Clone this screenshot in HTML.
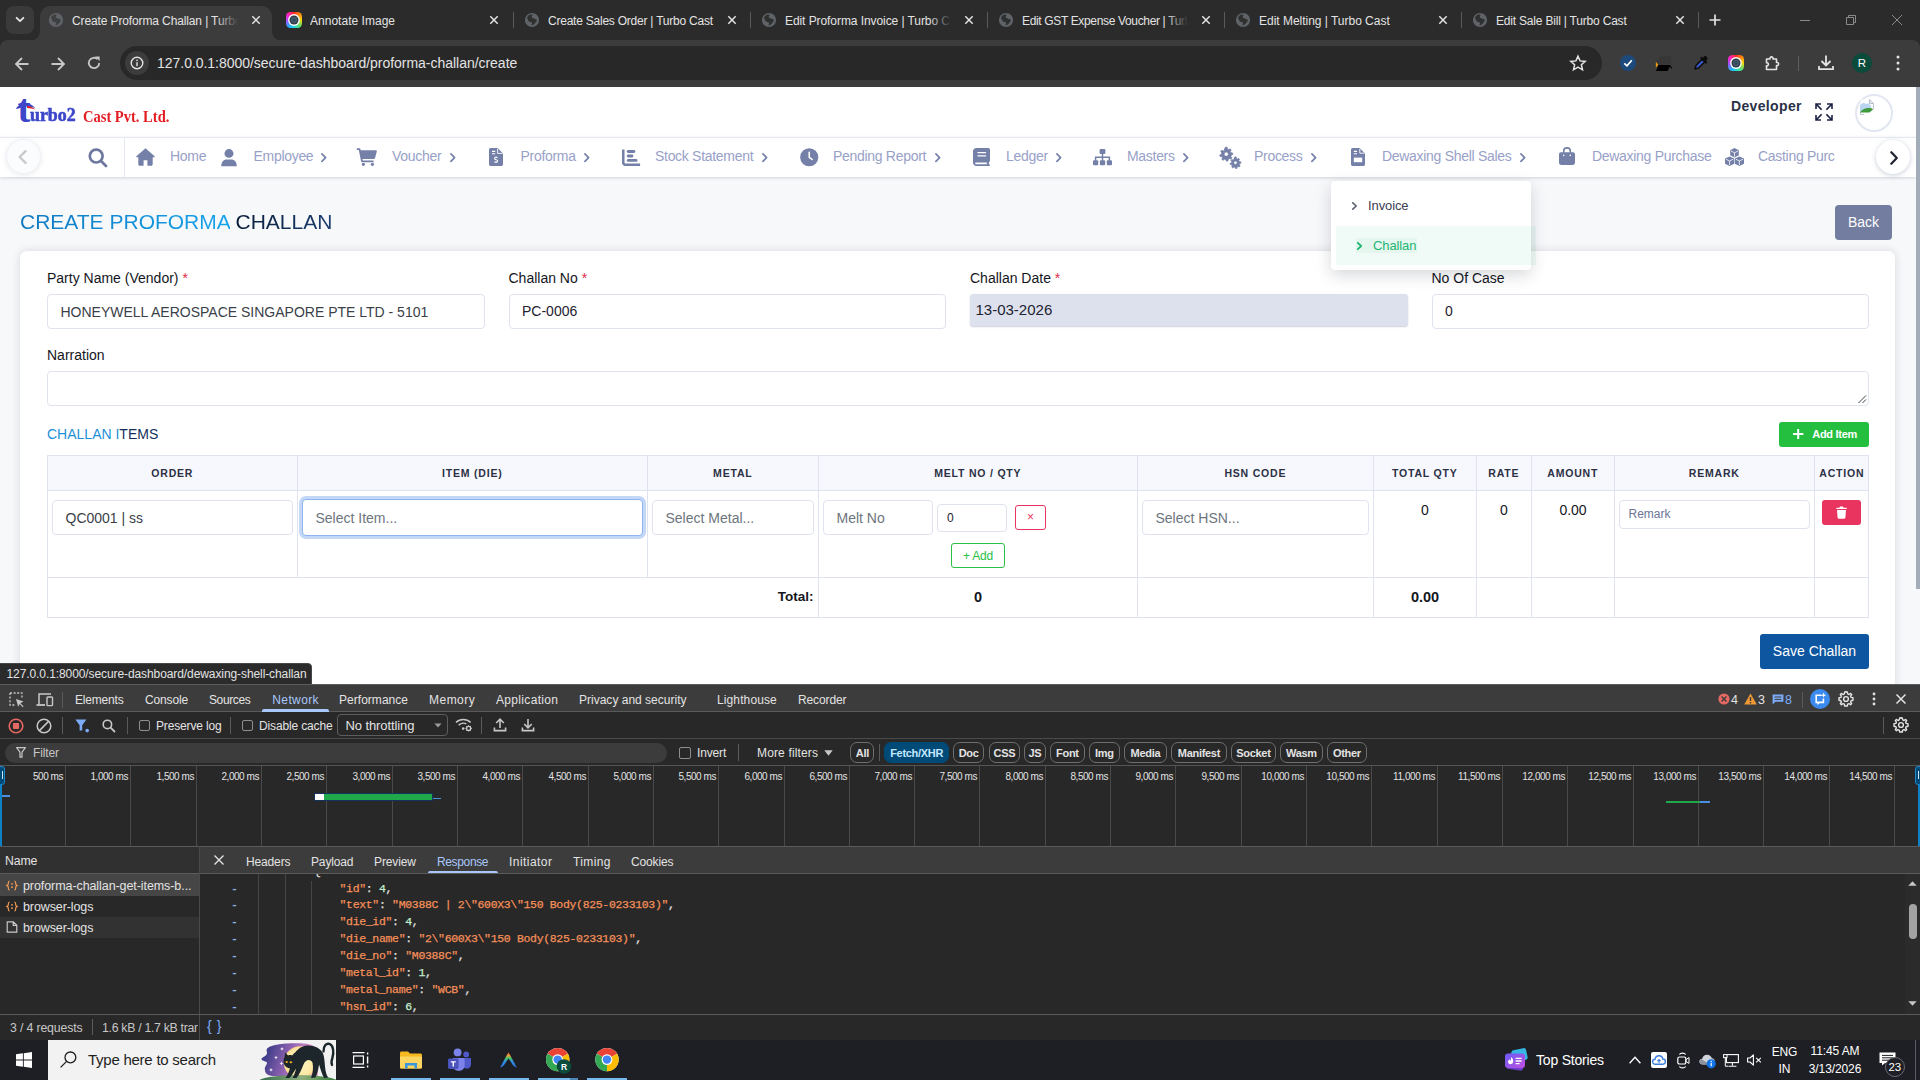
<!DOCTYPE html>
<html lang="en">
<head>
<meta charset="utf-8">
<title>Create Proforma Challan | Turbo Cast</title>
<style>
*{box-sizing:border-box;margin:0;padding:0}
html,body{width:1920px;height:1080px;overflow:hidden;background:#fff;font-family:"Liberation Sans",sans-serif}
.abs{position:absolute}
#root{position:relative;width:1920px;height:1080px;overflow:hidden}
svg{display:block;position:absolute;overflow:visible}

#tabstrip{position:absolute;left:0;top:0;width:1920px;height:52px;background:#2b2b2b}
#toolbar{position:absolute;left:0;top:40px;width:1920px;height:47px;background:#3c3c3c;border-radius:8px 8px 0 0}
.tt{position:absolute;top:7px;height:28px;line-height:28px;font-size:12px;letter-spacing:-0.2px;color:#e3e3e3;white-space:nowrap;overflow:hidden}
.tsep{position:absolute;top:12px;width:1px;height:16px;background:#5a5a5a}
#omni{position:absolute;left:120px;top:46px;width:1482px;height:34px;border-radius:17px;background:#282828}
#url{position:absolute;left:157px;top:47px;height:34px;line-height:33px;font-size:14px;color:#e3e3e3;white-space:nowrap;letter-spacing:-0.03px}

#app{position:absolute;left:0;top:87px;width:1916px;height:598px;background:#f7f8fa;overflow:hidden}
#app .abs{position:absolute}
#hdr{position:absolute;left:0;top:0;width:1916px;height:50px;background:#fff}
#nav{position:absolute;left:0;top:50px;width:1916px;height:40px;background:#fff;border-top:1px solid #e4e8f1;box-shadow:0 1px 3px rgba(60,65,90,.2)}
.ni{position:absolute;top:57px;height:24px;line-height:24px;font-size:14px;color:#98a1c8;white-space:nowrap;letter-spacing:-0.3px}
.nic{fill:#7480a8}
.lbl{position:absolute;font-size:14px;line-height:18px;color:#14161d;white-space:nowrap}
.lbl b{color:#e0294a;font-weight:400}
.inp{position:absolute;background:#fff;border:1px solid #dfe3ef;border-radius:4px;font-size:14px;color:#3a3f48;white-space:nowrap;overflow:hidden}
.ph{color:#6c757d}
#tbl{position:absolute;left:47px;top:368px;width:1822px;height:163px;border:1px solid #dfe3ef;background:#fff}
.th{position:absolute;top:369px;height:34px;line-height:34px;font-size:10.5px;font-weight:700;letter-spacing:0.8px;color:#2b3044;text-align:center;white-space:nowrap}
.vl{position:absolute;width:1px;background:#dfe3ef}
.hl{position:absolute;height:1px;background:#dfe3ef;left:47px;width:1822px}
.cv{position:absolute;font-size:14px;line-height:18px;color:#14161d;text-align:center;white-space:nowrap}

#dt{position:absolute;left:0;top:684px;width:1920px;height:356px;background:#282828;overflow:hidden;font-family:"Liberation Sans",sans-serif;color:#e3e3e3}
#dt .abs{position:absolute}
.dtt{position:absolute;top:6px;height:20px;line-height:20px;font-size:12px;letter-spacing:-0.1px;color:#e3e3e3;white-space:nowrap}
.dt2{position:absolute;height:18px;line-height:18px;font-size:12px;letter-spacing:-0.15px;color:#e3e3e3;white-space:nowrap}
.chip{position:absolute;top:58px;height:21px;border:1px solid #6e6e6e;border-radius:7px;font-size:11px;line-height:20px;text-align:center;color:#e3e3e3;white-space:nowrap;letter-spacing:-0.3px;font-weight:700}
.tl{position:absolute;top:85.5px;width:60px;text-align:right;font-size:10px;line-height:14px;color:#e3e3e3;white-space:nowrap;letter-spacing:-0.45px}
.gl{position:absolute;top:82px;width:1px;height:80px;background:#4a4a4a}
.code{position:absolute;left:339.5px;height:17px;line-height:17px;font-family:"Liberation Mono",monospace;font-size:11.5px;white-space:pre;color:#e3e3e3;letter-spacing:-0.33px;-webkit-text-stroke:0.25px currentColor}
.code i{font-style:normal;color:#f5905a}
.code u{text-decoration:none;color:#c4eed0}
.dash{position:absolute;left:231px;height:17px;line-height:17px;font-family:"Liberation Mono",monospace;font-size:11.5px;color:#8fb0e8;font-weight:700}

#tb{position:absolute;left:0;top:1040px;width:1920px;height:40px;background:#1e1f25;overflow:hidden;color:#fff}
#tb .abs{position:absolute}
.tbt{position:absolute;font-size:12px;line-height:14px;color:#fff;white-space:nowrap;text-align:center;letter-spacing:-0.1px}

</style>
</head>
<body>
<div id="root">
<!-- p10_chrome -->
<div id="tabstrip"></div><div id="toolbar"></div>
<div class="abs" style="left:6px;top:6px;width:28px;height:28px;border-radius:8px;background:#3a3a3a"></div>
<svg style="left:15px;top:16px" width="10" height="8" viewBox="0 0 10 8" ><path d="M1.6 1.8 L5 5.2 L8.4 1.8" fill="none" stroke="#e3e3e3" stroke-width="1.8" stroke-linecap="round" stroke-linejoin="round"/></svg>
<div class="abs" style="left:40px;top:6px;width:232px;height:35px;background:#3c3c3c;border-radius:10px 10px 0 0"></div>
<svg style="left:30px;top:31px" width="10" height="10" viewBox="0 0 10 10" ><path d="M10 0 V10 H0 A10 10 0 0 0 10 0Z" fill="#3c3c3c"/></svg>
<svg style="left:272px;top:31px" width="10" height="10" viewBox="0 0 10 10" ><path d="M0 0 V10 H10 A10 10 0 0 1 0 0Z" fill="#3c3c3c"/></svg>
<svg style="left:48px;top:12px" width="16" height="16" viewBox="0 0 16 16" ><circle cx="8" cy="8" r="7.1" fill="#5f6368"/><path d="M4.4 3.6 C5.8 2.4 7.8 2 8.8 2.8 C7.8 3.8 7.4 4.8 8.2 5.8 C9.4 7 11.2 6.4 12.6 7.6 C13 8.8 12.4 10 11.4 10.6 C11 12 9.6 13.2 7.4 13.4 C7.6 12.4 8.4 11.6 8 10.8 C7.2 9.6 5.6 10.2 4.6 9.2 C3.8 8.2 4.4 7.2 3.2 6.8 C3 5.6 3.6 4.4 4.4 3.6Z" fill="#3c3c3c" opacity=".92"/></svg>
<div class="tt" style="left:72px;width:170px;letter-spacing:-0.122px">Create Proforma Challan | Turbo Cast</div>
<div class="abs" style="left:216px;top:8px;width:26px;height:26px;background:linear-gradient(90deg,rgba(0,0,0,0),#3c3c3c 85%)"></div>
<svg style="left:250px;top:14px" width="12" height="12" viewBox="0 0 12 12" ><path d="M2.3 2.3 L9.7 9.7 M9.7 2.3 L2.3 9.7" stroke="#e3e3e3" stroke-width="1.5" stroke-linecap="butt" fill="none"/></svg>
<div class="abs" style="left:286px;top:12px;width:16px;height:16px;border-radius:4.5px;background:conic-gradient(from 0deg,#ff2a1f,#ff8a10 45deg,#f4d80c 90deg,#7ddc55 125deg,#25e0c8 170deg,#20b4ff 215deg,#9a55ff 260deg,#ff22c8 310deg,#ff2a1f)"></div><svg style="left:286px;top:12px" width="16" height="16" viewBox="0 0 16 16" ><circle cx="8" cy="8" r="5.9" fill="#fff"/><circle cx="8" cy="8" r="4.5" fill="#2f3b47"/><circle cx="8" cy="8" r="3" fill="#4a5b6b"/><circle cx="8" cy="8" r="1.7" fill="#2c4a5e"/></svg>
<div class="tt" style="left:310px;width:170px;letter-spacing:0.021px">Annotate Image</div>
<svg style="left:488px;top:14px" width="12" height="12" viewBox="0 0 12 12" ><path d="M2.3 2.3 L9.7 9.7 M9.7 2.3 L2.3 9.7" stroke="#e3e3e3" stroke-width="1.5" stroke-linecap="butt" fill="none"/></svg>
<svg style="left:524px;top:12px" width="16" height="16" viewBox="0 0 16 16" ><circle cx="8" cy="8" r="7.1" fill="#5f6368"/><path d="M4.4 3.6 C5.8 2.4 7.8 2 8.8 2.8 C7.8 3.8 7.4 4.8 8.2 5.8 C9.4 7 11.2 6.4 12.6 7.6 C13 8.8 12.4 10 11.4 10.6 C11 12 9.6 13.2 7.4 13.4 C7.6 12.4 8.4 11.6 8 10.8 C7.2 9.6 5.6 10.2 4.6 9.2 C3.8 8.2 4.4 7.2 3.2 6.8 C3 5.6 3.6 4.4 4.4 3.6Z" fill="#2b2b2b" opacity=".92"/></svg>
<div class="tt" style="left:548px;width:170px;letter-spacing:-0.229px">Create Sales Order | Turbo Cast</div>
<svg style="left:726px;top:14px" width="12" height="12" viewBox="0 0 12 12" ><path d="M2.3 2.3 L9.7 9.7 M9.7 2.3 L2.3 9.7" stroke="#e3e3e3" stroke-width="1.5" stroke-linecap="butt" fill="none"/></svg>
<svg style="left:761px;top:12px" width="16" height="16" viewBox="0 0 16 16" ><circle cx="8" cy="8" r="7.1" fill="#5f6368"/><path d="M4.4 3.6 C5.8 2.4 7.8 2 8.8 2.8 C7.8 3.8 7.4 4.8 8.2 5.8 C9.4 7 11.2 6.4 12.6 7.6 C13 8.8 12.4 10 11.4 10.6 C11 12 9.6 13.2 7.4 13.4 C7.6 12.4 8.4 11.6 8 10.8 C7.2 9.6 5.6 10.2 4.6 9.2 C3.8 8.2 4.4 7.2 3.2 6.8 C3 5.6 3.6 4.4 4.4 3.6Z" fill="#2b2b2b" opacity=".92"/></svg>
<div class="tt" style="left:785px;width:170px;letter-spacing:-0.073px">Edit Proforma Invoice | Turbo Cast</div>
<div class="abs" style="left:929px;top:8px;width:26px;height:26px;background:linear-gradient(90deg,rgba(0,0,0,0),#2b2b2b 85%)"></div>
<svg style="left:963px;top:14px" width="12" height="12" viewBox="0 0 12 12" ><path d="M2.3 2.3 L9.7 9.7 M9.7 2.3 L2.3 9.7" stroke="#e3e3e3" stroke-width="1.5" stroke-linecap="butt" fill="none"/></svg>
<svg style="left:998px;top:12px" width="16" height="16" viewBox="0 0 16 16" ><circle cx="8" cy="8" r="7.1" fill="#5f6368"/><path d="M4.4 3.6 C5.8 2.4 7.8 2 8.8 2.8 C7.8 3.8 7.4 4.8 8.2 5.8 C9.4 7 11.2 6.4 12.6 7.6 C13 8.8 12.4 10 11.4 10.6 C11 12 9.6 13.2 7.4 13.4 C7.6 12.4 8.4 11.6 8 10.8 C7.2 9.6 5.6 10.2 4.6 9.2 C3.8 8.2 4.4 7.2 3.2 6.8 C3 5.6 3.6 4.4 4.4 3.6Z" fill="#2b2b2b" opacity=".92"/></svg>
<div class="tt" style="left:1022px;width:170px;letter-spacing:-0.344px">Edit GST Expense Voucher | Turbo Cast</div>
<div class="abs" style="left:1166px;top:8px;width:26px;height:26px;background:linear-gradient(90deg,rgba(0,0,0,0),#2b2b2b 85%)"></div>
<svg style="left:1200px;top:14px" width="12" height="12" viewBox="0 0 12 12" ><path d="M2.3 2.3 L9.7 9.7 M9.7 2.3 L2.3 9.7" stroke="#e3e3e3" stroke-width="1.5" stroke-linecap="butt" fill="none"/></svg>
<svg style="left:1235px;top:12px" width="16" height="16" viewBox="0 0 16 16" ><circle cx="8" cy="8" r="7.1" fill="#5f6368"/><path d="M4.4 3.6 C5.8 2.4 7.8 2 8.8 2.8 C7.8 3.8 7.4 4.8 8.2 5.8 C9.4 7 11.2 6.4 12.6 7.6 C13 8.8 12.4 10 11.4 10.6 C11 12 9.6 13.2 7.4 13.4 C7.6 12.4 8.4 11.6 8 10.8 C7.2 9.6 5.6 10.2 4.6 9.2 C3.8 8.2 4.4 7.2 3.2 6.8 C3 5.6 3.6 4.4 4.4 3.6Z" fill="#2b2b2b" opacity=".92"/></svg>
<div class="tt" style="left:1259px;width:170px;letter-spacing:-0.018px">Edit Melting | Turbo Cast</div>
<svg style="left:1437px;top:14px" width="12" height="12" viewBox="0 0 12 12" ><path d="M2.3 2.3 L9.7 9.7 M9.7 2.3 L2.3 9.7" stroke="#e3e3e3" stroke-width="1.5" stroke-linecap="butt" fill="none"/></svg>
<svg style="left:1472px;top:12px" width="16" height="16" viewBox="0 0 16 16" ><circle cx="8" cy="8" r="7.1" fill="#5f6368"/><path d="M4.4 3.6 C5.8 2.4 7.8 2 8.8 2.8 C7.8 3.8 7.4 4.8 8.2 5.8 C9.4 7 11.2 6.4 12.6 7.6 C13 8.8 12.4 10 11.4 10.6 C11 12 9.6 13.2 7.4 13.4 C7.6 12.4 8.4 11.6 8 10.8 C7.2 9.6 5.6 10.2 4.6 9.2 C3.8 8.2 4.4 7.2 3.2 6.8 C3 5.6 3.6 4.4 4.4 3.6Z" fill="#2b2b2b" opacity=".92"/></svg>
<div class="tt" style="left:1496px;width:170px;letter-spacing:-0.196px">Edit Sale Bill | Turbo Cast</div>
<svg style="left:1674px;top:14px" width="12" height="12" viewBox="0 0 12 12" ><path d="M2.3 2.3 L9.7 9.7 M9.7 2.3 L2.3 9.7" stroke="#e3e3e3" stroke-width="1.5" stroke-linecap="butt" fill="none"/></svg>
<div class="tsep" style="left:513px"></div>
<div class="tsep" style="left:750px"></div>
<div class="tsep" style="left:987px"></div>
<div class="tsep" style="left:1224px"></div>
<div class="tsep" style="left:1461px"></div>
<div class="tsep" style="left:1698px"></div>
<svg style="left:1708px;top:13px" width="14" height="14" viewBox="0 0 14 14" ><path d="M7 1.5 V12.5 M1.5 7 H12.5" stroke="#e3e3e3" stroke-width="1.7" fill="none"/></svg>
<svg style="left:1800px;top:20px" width="10" height="1" viewBox="0 0 10 1" ><rect x="0" y="0" width="10" height="1" fill="#8a8a8a"/></svg>
<svg style="left:1846px;top:15px" width="10" height="10" viewBox="0 0 10 10" ><path d="M0.5 2.5 H7.5 V9.5 H0.5Z M2.5 2.5 V0.5 H9.5 V7.5 H7.5" stroke="#8a8a8a" stroke-width="1" fill="none"/></svg>
<svg style="left:1892px;top:15px" width="10" height="10" viewBox="0 0 10 10" ><path d="M0 0 L10 10 M10 0 L0 10" stroke="#8a8a8a" stroke-width="1" fill="none"/></svg>
<svg style="left:14px;top:55.6px" width="16" height="16" viewBox="0 0 16 16" ><path d="M14.5 8 H2.5 M8 2 L2 8 L8 14" stroke="#c7c7c7" stroke-width="1.8" fill="none" stroke-linecap="butt" stroke-linejoin="miter"/></svg>
<svg style="left:50px;top:55.6px" width="16" height="16" viewBox="0 0 16 16" ><path d="M1.5 8 H13.5 M8 2 L14 8 L8 14" stroke="#c7c7c7" stroke-width="1.8" fill="none"/></svg>
<svg style="left:86px;top:55px" width="16" height="16" viewBox="0 0 16 16" ><path d="M13.2 8 A5.2 5.2 0 1 1 11.6 4.2" stroke="#c7c7c7" stroke-width="1.8" fill="none"/><path d="M9 1.5 H13.6 V6.1Z" fill="#c7c7c7"/></svg>
<div id="omni"></div>
<div class="abs" style="left:125px;top:51px;width:24px;height:24px;border-radius:12px;background:#3c3c3c"></div>
<svg style="left:130px;top:56px" width="14" height="14" viewBox="0 0 14 14" ><circle cx="7" cy="7" r="5.8" stroke="#e3e3e3" stroke-width="1.4" fill="none"/><rect x="6.3" y="6.2" width="1.4" height="4" fill="#e3e3e3"/><rect x="6.3" y="3.6" width="1.4" height="1.5" fill="#e3e3e3"/></svg>
<div id="url">127.0.0.1:8000/secure-dashboard/proforma-challan/create</div>
<svg style="left:1569px;top:54px" width="18" height="18" viewBox="0 0 18 18" ><path d="M9 2.2 L11.1 6.9 L16.2 7.4 L12.4 10.8 L13.5 15.8 L9 13.2 L4.5 15.8 L5.6 10.8 L1.8 7.4 L6.9 6.9Z" stroke="#e3e3e3" stroke-width="1.5" fill="none" stroke-linejoin="miter"/></svg>
<svg style="left:1620px;top:55px" width="16" height="16" viewBox="0 0 16 16" ><circle cx="8" cy="8" r="8" fill="#1d4a7c"/><path d="M4.3 8.3 L7 10.8 L11.8 5.3" stroke="#fff" stroke-width="1.7" fill="none"/></svg>
<svg style="left:1655px;top:54px" width="18" height="18" viewBox="0 0 18 18" ><path d="M4.4 4 C6 1.6 12 1.4 16 2 L16.4 7.6 L15.4 10.8 H3 L1.6 8Z" fill="#373737"/><path d="M3.6 11 H15.2 L17.4 14.6 L16.8 15 L14.8 12.4 L12.6 17 H1Z" fill="#000"/><path d="M0.9 7.8 L3.2 10.8 L0.9 13.8Z" fill="#f59a0c"/></svg>
<svg style="left:1692px;top:54px" width="18" height="18" viewBox="0 0 18 18" ><path d="M3 15 L4 11.5 L10.5 5 L13 7.5 L6.5 14Z" fill="#3d5bd8" stroke="#0c0c0c" stroke-width="1.6" stroke-linejoin="round"/><path d="M9.5 4 L14 8.5" stroke="#0c0c0c" stroke-width="2.4" stroke-linecap="round"/><path d="M12 2.5 C13.5 1 16.5 4 15.2 5.6 L13 7.5 L10.5 5Z" fill="#0c0c0c"/></svg>
<div class="abs" style="left:1728px;top:55px;width:16px;height:16px;border-radius:4.5px;background:conic-gradient(from 0deg,#ff2a1f,#ff8a10 45deg,#f4d80c 90deg,#7ddc55 125deg,#25e0c8 170deg,#20b4ff 215deg,#9a55ff 260deg,#ff22c8 310deg,#ff2a1f)"></div><svg style="left:1728px;top:55px" width="16" height="16" viewBox="0 0 16 16" ><circle cx="8" cy="8" r="5.9" fill="#fff"/><circle cx="8" cy="8" r="4.5" fill="#2f3b47"/><circle cx="8" cy="8" r="3" fill="#4a5b6b"/><circle cx="8" cy="8" r="1.7" fill="#2c4a5e"/></svg>
<svg style="left:1764px;top:54px" width="18" height="18" viewBox="0 0 18 18" ><path d="M2.5 5 H6 C5.2 2.2 9.8 2.2 9 5 H12.5 V8.5 C15.3 7.7 15.3 12.3 12.5 11.5 V15.5 H2.5 V11.8 C5 12.4 5 8.2 2.5 8.8Z" stroke="#e3e3e3" stroke-width="1.6" fill="none" stroke-linejoin="round"/></svg>
<div class="abs" style="left:1798px;top:56px;width:1px;height:15px;background:#5e5e5e"></div>
<svg style="left:1817px;top:54px" width="18" height="18" viewBox="0 0 18 18" ><path d="M9 1.5 V11 M4.5 7 L9 11.5 L13.5 7" stroke="#e3e3e3" stroke-width="1.8" fill="none"/><path d="M2 12 V15.2 H16 V12" stroke="#e3e3e3" stroke-width="1.8" fill="none"/></svg>
<div class="abs" style="left:1852px;top:53px;width:20px;height:20px;border-radius:10px;background:#0a4b3c"></div>
<div class="abs" style="left:1852px;top:53px;white-space:nowrap;width:20px;text-align:center;font-size:11.5px;line-height:20px;color:#fff">R</div>
<svg style="left:1896px;top:55px" width="4" height="16" viewBox="0 0 4 16" ><circle cx="2" cy="2" r="1.5" fill="#e3e3e3"/><circle cx="2" cy="8" r="1.5" fill="#e3e3e3"/><circle cx="2" cy="14" r="1.5" fill="#e3e3e3"/></svg>
<!-- p20_app -->
<div id="app">
<div id="hdr"></div>
<div id="nav"></div>
<div class="abs" style="left:30.3px;top:16.9px;font-family:'Liberation Serif',serif;font-weight:700;font-size:19px;line-height:22px;color:#3d46c9;-webkit-text-stroke:0.6px #3d46c9;white-space:nowrap;transform:scaleX(.94);transform-origin:0 0">urbo2</div>
<div class="abs" style="left:82.6px;top:18.2px;font-family:'Liberation Serif',serif;font-weight:700;font-size:17.5px;line-height:22px;color:#e31b23;white-space:nowrap;transform:scaleX(.83);transform-origin:0 0">Cast Pvt. Ltd.</div>
<div class="abs" style="left:17.5px;top:-0.45px;font-family:'Liberation Serif',serif;font-weight:700;font-size:39px;line-height:44px;color:#3d46c9;white-space:nowrap">t</div>
<svg style="left:15px;top:11px" width="22" height="25" viewBox="0 0 22 25" ><path d="M0.8 10.9 C2.5 8 4.5 6.4 7 6 L12 5.3 C15.4 5.7 18.4 7.7 20.4 10.3 C17.6 8.9 15 8.5 12 8.4 L7 9.4 C4.6 9.9 2.6 10.8 0.8 10.9Z" fill="#3d46c9"/><path d="M12 7.9 C15 8.1 18 9.3 20.6 11.6 C17.6 10.7 15 10.1 12 10Z" fill="#e31b23"/></svg>
<div class="abs" style="left:1731px;top:10px;white-space:nowrap;font-size:14px;font-weight:700;line-height:18px;color:#2a3247;letter-spacing:.35px">Developer</div>
<svg style="left:1815px;top:16px" width="18" height="18" viewBox="0 0 18 18" ><path d="M1 6 V1 H6 M1 1 L6.6 6.6 M12 1 H17 V6 M17 1 L11.4 6.6 M1 12 V17 H6 M1 17 L6.6 11.4 M17 12 V17 H12 M17 17 L11.4 11.4" stroke="#1f2346" stroke-width="1.6" fill="none" stroke-linecap="butt"/></svg>
<div class="abs" style="left:1855px;top:7px;width:38px;height:38px;border-radius:19px;border:2px solid #e1e6f1;background:#fff"></div>
<svg style="left:1859px;top:12px" width="16" height="16" viewBox="0 0 16 16" ><path d="M1.5 0.5 H10.5 L14.5 4.5 V15.5 H1.5Z" fill="#fff"/><path d="M14.5 4.5 V15.5 M1.5 10 V15.5 H5" stroke="#b9bec8" stroke-width="0.9" fill="none"/><path d="M10.5 0.5 V4.5 H14.5Z" fill="#eceef2" stroke="#b4b9c4" stroke-width="0.9" stroke-linejoin="round"/><path d="M1 6.4 C2.4 4 5.4 3.4 7 5 C8.6 4 10.6 4.4 11.4 6 L12.6 8.4 L1 13Z" fill="#b9d5f2"/><path d="M1 13.6 C3.4 9.8 8 8.2 13 9.6 L14.8 10.4 V13.6Z" fill="#3f9b3c"/><path d="M8.4 15.6 L15 9.6 V15.6Z" fill="#fff"/></svg>
<div class="abs" style="left:5.7px;top:52.4px;width:35px;height:35px;border-radius:17.5px;background:#fbfcfe;border:1px solid #f0f2f7;box-shadow:0 1px 5px rgba(60,65,90,.12)"></div>
<svg style="left:18px;top:63px" width="9" height="14" viewBox="0 0 9 14" ><path d="M7.6 1.2 L1.6 7 L7.6 12.8" stroke="#c9c9cb" stroke-width="2.4" fill="none" stroke-linecap="round" stroke-linejoin="round"/></svg>
<svg style="left:88px;top:60.5px" width="19" height="19" viewBox="0 0 19 19" ><circle cx="8.2" cy="8.1" r="6.4" stroke="#6e789f" stroke-width="2.7" fill="none"/><path d="M13 12.9 L18 17.9" stroke="#6e789f" stroke-width="2.8" stroke-linecap="round"/></svg>
<div class="abs" style="left:124px;top:51px;width:1px;height:39px;background:#e4e8f1"></div>
<svg style="left:136px;top:61px" width="19" height="18" viewBox="0 0 19 18" preserveAspectRatio="none"><path class="nic" d="M9.5 0.3 L0.4 8.2 C0 8.6 0.3 9.3 0.9 9.3 H2.3 V16.3 C2.3 17.2 3 17.8 3.8 17.8 H7.6 V12.2 H11.4 V17.8 H15.2 C16 17.8 16.7 17.2 16.7 16.3 V9.3 H18.1 C18.7 9.3 19 8.6 18.6 8.2Z"/></svg>
<div class="ni" style="left:170px">Home</div>
<svg style="left:221px;top:61.5px" width="16" height="17.5" viewBox="0 0 16 18" preserveAspectRatio="none"><circle class="nic" cx="8" cy="4.6" r="4.5"/><path class="nic" d="M0.2 17.8 C0.2 13.4 2.6 10.8 5.6 10.8 H10.4 C13.4 10.8 15.8 13.4 15.8 17.8Z"/></svg>
<div class="ni" style="left:253.5px">Employee</div>
<svg style="left:321px;top:65.5px" width="5.5" height="9.2" viewBox="0 0 5.5 9.2" ><path d="M0.9 0.9 L4.6 4.6 L0.9 8.3" stroke="#7480a8" stroke-width="1.7" fill="none" stroke-linecap="round" stroke-linejoin="round"/></svg>
<svg style="left:356px;top:60.5px" width="21" height="18.0" viewBox="0 0 21 18" preserveAspectRatio="none"><path class="nic" d="M0.8 0.2 H3.4 C3.9 0.2 4.3 0.5 4.4 1 L4.7 2.2 H19.8 C20.5 2.2 21 2.9 20.8 3.5 L19 10.2 C18.9 10.7 18.4 11 17.9 11 H6.5 L6.8 12.6 H17.6 V14.2 H6.1 C5.6 14.2 5.2 13.9 5.1 13.4 L2.8 1.9 H0.8Z"/><circle class="nic" cx="7.4" cy="16.3" r="1.6"/><circle class="nic" cx="16.4" cy="16.3" r="1.6"/></svg>
<div class="ni" style="left:392px">Voucher</div>
<svg style="left:450px;top:65.5px" width="5.5" height="9.2" viewBox="0 0 5.5 9.2" ><path d="M0.9 0.9 L4.6 4.6 L0.9 8.3" stroke="#7480a8" stroke-width="1.7" fill="none" stroke-linecap="round" stroke-linejoin="round"/></svg>
<svg style="left:489px;top:61px" width="14" height="18" viewBox="0 0 14 18" preserveAspectRatio="none"><path class="nic" d="M1.8 0 H8.6 L14 5.4 V16.2 C14 17.2 13.2 18 12.2 18 H1.8 C0.8 18 0 17.2 0 16.2 V1.8 C0 0.8 0.8 0 1.8 0Z"/><path d="M3 3.4 H6.2 M3 5.8 H6.2" stroke="#fff" stroke-width="1.1"/><path d="M8.6 0.6 V5.4 H13.4" stroke="#fff" stroke-width="0.9" fill="none"/><path d="M8.6 9.8 C7.4 8.8 5.4 9.2 5.6 10.6 C5.8 12 8.4 11.4 8.6 12.8 C8.8 14.2 6.6 14.6 5.4 13.6 M7.1 8.4 V9.2 M7.1 14.2 V15" stroke="#fff" stroke-width="1.1" fill="none"/></svg>
<div class="ni" style="left:520.5px">Proforma</div>
<svg style="left:584px;top:65.5px" width="5.5" height="9.2" viewBox="0 0 5.5 9.2" ><path d="M0.9 0.9 L4.6 4.6 L0.9 8.3" stroke="#7480a8" stroke-width="1.7" fill="none" stroke-linecap="round" stroke-linejoin="round"/></svg>
<svg style="left:621.5px;top:62px" width="18.5" height="17" viewBox="0 0 19 17" preserveAspectRatio="none"><path class="nic" d="M0 0.6 H2.6 V13.4 C2.6 14 3 14.4 3.6 14.4 H18.6 V17 H3.4 C1.5 17 0 15.6 0 13.8Z"/><rect class="nic" x="4.9" y="1.1" width="8.8" height="2.9" rx="1.4"/><rect class="nic" x="4.9" y="5.5" width="6.8" height="2.9" rx="1.4"/><rect class="nic" x="4.9" y="9.9" width="11" height="2.9" rx="1.4"/></svg>
<div class="ni" style="left:655px">Stock Statement</div>
<svg style="left:762px;top:65.5px" width="5.5" height="9.2" viewBox="0 0 5.5 9.2" ><path d="M0.9 0.9 L4.6 4.6 L0.9 8.3" stroke="#7480a8" stroke-width="1.7" fill="none" stroke-linecap="round" stroke-linejoin="round"/></svg>
<svg style="left:799.5px;top:61px" width="18.5" height="18.5" viewBox="0 0 19 19" preserveAspectRatio="none"><circle class="nic" cx="9.5" cy="9.5" r="9.3"/><path d="M9.5 4.4 V9.7 L12.4 11.8" stroke="#fff" stroke-width="1.6" fill="none" stroke-linecap="round"/></svg>
<div class="ni" style="left:833px">Pending Report</div>
<svg style="left:934.5px;top:65.5px" width="5.5" height="9.2" viewBox="0 0 5.5 9.2" ><path d="M0.9 0.9 L4.6 4.6 L0.9 8.3" stroke="#7480a8" stroke-width="1.7" fill="none" stroke-linecap="round" stroke-linejoin="round"/></svg>
<svg style="left:973px;top:61px" width="17" height="18" viewBox="0 0 17 18" preserveAspectRatio="none"><path class="nic" d="M3.4 0 H15.2 C16.2 0 17 0.8 17 1.8 V12.6 C17 13.4 16.5 14 15.9 14.3 V16.2 H16.2 C16.7 16.2 17 16.6 17 17.1 C17 17.6 16.7 18 16.2 18 H3.4 C1.5 18 0 16.5 0 14.6 V3.4 C0 1.5 1.5 0 3.4 0Z"/><path d="M3.4 14.4 C2.6 14.4 2.1 14.9 2.1 15.5 C2.1 16.1 2.6 16.2 3.4 16.2 H13.8 V14.4Z" fill="#fff"/><path d="M5 4.6 H12.6 M5 7.8 H12.6" stroke="#fff" stroke-width="1.3" stroke-linecap="round"/></svg>
<div class="ni" style="left:1006px">Ledger</div>
<svg style="left:1056px;top:65.5px" width="5.5" height="9.2" viewBox="0 0 5.5 9.2" ><path d="M0.9 0.9 L4.6 4.6 L0.9 8.3" stroke="#7480a8" stroke-width="1.7" fill="none" stroke-linecap="round" stroke-linejoin="round"/></svg>
<svg style="left:1093px;top:62px" width="19" height="16.5" viewBox="0 0 19 17" preserveAspectRatio="none"><rect class="nic" x="6.6" y="0" width="5.8" height="5.2" rx="1"/><rect class="nic" x="0" y="11.6" width="5.2" height="5.2" rx="1"/><rect class="nic" x="6.9" y="11.6" width="5.2" height="5.2" rx="1"/><rect class="nic" x="13.8" y="11.6" width="5.2" height="5.2" rx="1"/><path d="M9.5 5 V12 M2.6 12 V8.4 H16.4 V12" stroke="#7480a8" stroke-width="1.5" fill="none"/></svg>
<div class="ni" style="left:1127px">Masters</div>
<svg style="left:1183px;top:65.5px" width="5.5" height="9.2" viewBox="0 0 5.5 9.2" ><path d="M0.9 0.9 L4.6 4.6 L0.9 8.3" stroke="#7480a8" stroke-width="1.7" fill="none" stroke-linecap="round" stroke-linejoin="round"/></svg>
<svg style="left:1218.5px;top:59.5px" width="22.5" height="21.5" viewBox="0 0 22 21" preserveAspectRatio="none"><path class="nic" stroke="#7480a8" stroke-width="0.7" d="M6.6 0 L8 0.3 L8.2 2 L9.4 2.6 L10.9 1.8 L11.9 2.9 L11 4.4 L11.6 5.6 L13.3 5.8 L13.5 7.3 L11.9 8 L11.6 9.3 L12.6 10.6 L11.7 11.8 L10.1 11.2 L9 11.9 L8.8 13.6 L7.3 13.8 L6.6 12.2 L5.3 12 L4 13 L2.8 12.1 L3.4 10.5 L2.7 9.4 L1 9.2 L0.8 7.7 L2.4 7 L2.7 5.7 L1.7 4.4 L2.6 3.2 L4.2 3.8 L5.3 3.1 L5.5 1.4Z M7.1 4.9 A2.1 2.1 0 1 0 7.1 9.1 A2.1 2.1 0 1 0 7.1 4.9Z" fill-rule="evenodd"/><path class="nic" stroke="#7480a8" stroke-width="0.7" d="M15.6 9.6 L16.9 9.9 L17 11.3 L18 11.8 L19.2 11.1 L20.1 12.1 L19.4 13.3 L19.9 14.3 L21.3 14.5 L21.4 15.8 L20.1 16.4 L19.8 17.4 L20.7 18.5 L19.9 19.5 L18.6 19 L17.7 19.6 L17.5 21 L16.2 21 L15.7 19.7 L14.6 19.5 L13.5 20.4 L12.5 19.6 L13 18.3 L12.4 17.4 L11 17.2 L10.9 15.9 L12.2 15.3 L12.5 14.3 L11.6 13.2 L12.4 12.2 L13.7 12.7 L14.6 12.1 L14.8 10.7Z M16.1 13.7 A1.7 1.7 0 1 0 16.1 17.1 A1.7 1.7 0 1 0 16.1 13.7Z" fill-rule="evenodd"/></svg>
<div class="ni" style="left:1254px">Process</div>
<svg style="left:1310.5px;top:65.5px" width="5.5" height="9.2" viewBox="0 0 5.5 9.2" ><path d="M0.9 0.9 L4.6 4.6 L0.9 8.3" stroke="#7480a8" stroke-width="1.7" fill="none" stroke-linecap="round" stroke-linejoin="round"/></svg>
<svg style="left:1351px;top:61px" width="14" height="18" viewBox="0 0 14 18" preserveAspectRatio="none"><path class="nic" d="M1.8 0 H8.6 L14 5.4 V16.2 C14 17.2 13.2 18 12.2 18 H1.8 C0.8 18 0 17.2 0 16.2 V1.8 C0 0.8 0.8 0 1.8 0Z"/><path d="M8.8 0.8 V5.2 H13.2" stroke="#fff" stroke-width="0.9" fill="none"/><path d="M2.8 3.4 H6 M2.8 5.8 H6" stroke="#fff" stroke-width="1.1"/><rect x="2.8" y="9.6" width="8.4" height="4.6" fill="#fff"/></svg>
<div class="ni" style="left:1382px">Dewaxing Shell Sales</div>
<svg style="left:1519.5px;top:65.5px" width="5.5" height="9.2" viewBox="0 0 5.5 9.2" ><path d="M0.9 0.9 L4.6 4.6 L0.9 8.3" stroke="#7480a8" stroke-width="1.7" fill="none" stroke-linecap="round" stroke-linejoin="round"/></svg>
<svg style="left:1558.6px;top:60px" width="16.0" height="18" viewBox="0 0 17 18" preserveAspectRatio="none"><path class="nic" d="M2 5.2 H15 C16.1 5.2 17 6.1 17 7.2 V15.6 C17 16.9 15.9 18 14.6 18 H2.4 C1.1 18 0 16.9 0 15.6 V7.2 C0 6.1 0.9 5.2 2 5.2Z"/><path d="M5 7.4 V4 C5 2.2 6.6 0.9 8.5 0.9 C10.4 0.9 12 2.2 12 4 V7.4" stroke="#7480a8" stroke-width="1.7" fill="none" stroke-linecap="round"/><circle cx="5" cy="8.4" r="0.8" fill="#fff"/><circle cx="12" cy="8.4" r="0.8" fill="#fff"/></svg>
<div class="ni" style="left:1592px">Dewaxing Purchase</div>
<svg style="left:1725px;top:61px" width="19" height="18" viewBox="0 0 19 18" preserveAspectRatio="none"><path class="nic" d="M9.5 0 L13.8 2.2 V7.2 L9.5 9.4 L5.2 7.2 V2.2Z"/><path class="nic" d="M4.6 8.4 L9.2 10.6 V15.8 L4.6 18 L0 15.8 V10.6Z"/><path class="nic" d="M14.4 8.4 L19 10.6 V15.8 L14.4 18 L9.8 15.8 V10.6Z"/><path d="M9.5 4.8 V8.6 M6 3 L9.5 4.8 L13 3 M4.6 13 V17 M1 11.2 L4.6 13 L8.2 11.2 M14.4 13 V17 M10.8 11.2 L14.4 13 L18 11.2" stroke="#fff" stroke-width="0.8" fill="none"/></svg>
<div class="ni" style="left:1758px">Casting Purc</div>
<div class="abs" style="left:1876px;top:53px;width:34px;height:34px;border-radius:17px;background:#fff;box-shadow:0 1px 5px rgba(120,130,160,.4)"></div>
<svg style="left:1889.5px;top:63.5px" width="8" height="14" viewBox="0 0 8 14" ><path d="M1.3 1.2 L6.8 7 L1.3 12.8" stroke="#1f2330" stroke-width="2.2" fill="none" stroke-linecap="round" stroke-linejoin="round"/></svg>
<div class="abs" style="left:20px;top:122.4px;font-size:21px;line-height:26px;white-space:nowrap"><span style="background:linear-gradient(90deg,#0f78bf,#16a3ec);-webkit-background-clip:text;background-clip:text;color:transparent">CREATE PROFORMA</span> <span style="background:linear-gradient(90deg,#081d38,#1c3e70);-webkit-background-clip:text;background-clip:text;color:transparent">CHALLAN</span></div>
<div class="abs" style="left:1835px;top:118px;width:57px;height:35px;border-radius:4px;background:#737d9f;color:#fff;font-size:14px;line-height:35px;text-align:center">Back</div>
<div class="abs" style="left:20px;top:164px;width:1875px;height:460px;background:#fff;border-radius:7px;box-shadow:0 0 10px rgba(20,25,40,.14)"></div>
<div class="lbl" style="left:47px;top:182px">Party Name (Vendor) <b>*</b></div>
<div class="lbl" style="left:508.5px;top:182px">Challan No <b>*</b></div>
<div class="lbl" style="left:970px;top:182px">Challan Date <b>*</b></div>
<div class="lbl" style="left:1431.5px;top:182px">No Of Case</div>
<div class="inp" style="left:47px;top:207px;width:438px;height:35px;line-height:34px;padding-left:12.5px">HONEYWELL AEROSPACE SINGAPORE PTE LTD - 5101</div>
<div class="inp" style="left:509px;top:207px;width:437px;height:35px;line-height:32px;padding-left:12px;color:#1e2230">PC-0006</div>
<div class="abs" style="left:970px;top:207px;width:438px;height:32px;border-radius:3px;background:#dde1ee;box-shadow:0 1px 1.5px rgba(90,100,140,.3);font-size:15px;line-height:31px;padding-left:5.5px;color:#1e2230;white-space:nowrap">13-03-2026</div>
<div class="inp" style="left:1432px;top:207px;width:437px;height:35px;line-height:32px;padding-left:12px;color:#1e2230">0</div>
<div class="lbl" style="left:47px;top:259px">Narration</div>
<div class="inp" style="left:47px;top:284px;width:1822px;height:35px"></div>
<svg style="left:1857px;top:307px" width="10" height="10" viewBox="0 0 10 10" ><path d="M9 1.5 L1.5 9 M9 5.5 L5.5 9" stroke="#3a3f48" stroke-width="1" fill="none"/></svg>
<div class="abs" style="left:47px;top:338px;font-size:14px;line-height:18px;white-space:nowrap"><span style="color:#1e90d8">CHALLAN I</span><span style="color:#14305a">TEMS</span></div>
<div class="abs" style="left:1779px;top:335px;width:90px;height:25px;border-radius:3px;background:#25bf3f;color:#fff;font-size:11px;font-weight:700;line-height:25px;white-space:nowrap;letter-spacing:-0.3px"><span style="position:absolute;left:33.3px">Add Item</span></div>
<svg style="left:1793.3px;top:342.3px" width="10.4" height="10" viewBox="0 0 10.4 10" ><path d="M5.2 0 V10 M0 5 H10.4" stroke="#fff" stroke-width="2" fill="none"/></svg>
<div id="tbl"></div>
<div class="abs" style="left:48px;top:369px;width:1820px;height:34px;background:#f7f8fd"></div>
<div class="th" style="left:47.3px;width:250px">ORDER</div>
<div class="th" style="left:297.3px;width:350px">ITEM (DIE)</div>
<div class="th" style="left:647.3px;width:171px">METAL</div>
<div class="th" style="left:818.3px;width:319px">MELT NO / QTY</div>
<div class="th" style="left:1137.3px;width:236px">HSN CODE</div>
<div class="th" style="left:1373.3px;width:103px">TOTAL QTY</div>
<div class="th" style="left:1476.3px;width:55px">RATE</div>
<div class="th" style="left:1531.3px;width:83px">AMOUNT</div>
<div class="th" style="left:1614.3px;width:200px">REMARK</div>
<div class="th" style="left:1814.3px;width:55px">ACTION</div>
<div class="vl" style="left:297px;top:369px;height:122px"></div>
<div class="vl" style="left:647px;top:369px;height:122px"></div>
<div class="vl" style="left:818px;top:369px;height:162px"></div>
<div class="vl" style="left:1137px;top:369px;height:162px"></div>
<div class="vl" style="left:1373px;top:369px;height:162px"></div>
<div class="vl" style="left:1476px;top:369px;height:162px"></div>
<div class="vl" style="left:1531px;top:369px;height:162px"></div>
<div class="vl" style="left:1614px;top:369px;height:162px"></div>
<div class="vl" style="left:1814px;top:369px;height:162px"></div>
<div class="hl" style="top:403px"></div>
<div class="hl" style="top:490px"></div>
<div class="inp" style="left:52px;top:413px;width:241px;height:35px;line-height:34px;padding-left:12.5px">QC0001 | ss</div>
<div class="inp" style="left:302px;top:412px;width:341px;height:37px;line-height:36px;padding-left:12.5px;border:1px solid #8db4f0;box-shadow:0 0 0 3px #c3d7f7;border-radius:4px"><span class="ph">Select Item...</span></div>
<div class="inp" style="left:652px;top:413px;width:162px;height:35px;line-height:34px;padding-left:12.5px"><span class="ph">Select Metal...</span></div>
<div class="inp" style="left:823px;top:413px;width:110px;height:35px;line-height:34px;padding-left:12.5px"><span class="ph">Melt No</span></div>
<div class="inp" style="left:937px;top:417px;width:70px;height:28px;line-height:27.5px;padding-left:9px;font-size:12px;color:#1e2230">0</div>
<div class="abs" style="left:1015px;top:418px;width:31px;height:25px;border:1px solid #e8345f;border-radius:3px;background:#fff;color:#e8345f;font-size:12px;line-height:22px;text-align:center">×</div>
<div class="abs" style="left:951px;top:456px;width:54px;height:25px;border:1px solid #28c045;border-radius:3px;background:#fff;color:#28c045;font-size:12px;line-height:24px;text-align:center;letter-spacing:-0.2px">+ Add</div>
<div class="inp" style="left:1142px;top:413px;width:227px;height:35px;line-height:34px;padding-left:12.5px"><span class="ph">Select HSN...</span></div>
<div class="cv" style="left:1374px;top:414px;width:102px">0</div>
<div class="cv" style="left:1477px;top:414px;width:54px">0</div>
<div class="cv" style="left:1532px;top:414px;width:82px">0.00</div>
<div class="inp" style="left:1619px;top:413px;width:191px;height:29px;line-height:27px;padding-left:8.5px;font-size:12px"><span style="color:#6c7596">Remark</span></div>
<div class="abs" style="left:1822px;top:413px;width:39px;height:25px;background:#e8345f;border-radius:3px"></div>
<svg style="left:1836px;top:419px" width="11" height="13" viewBox="0 0 11 13" ><path d="M0.3 1.7 H3.4 L4 0.4 H7 L7.6 1.7 H10.7 V3 H0.3Z M1 4 H10 L9.4 11.6 C9.4 12.2 8.8 12.7 8.2 12.7 H2.8 C2.2 12.7 1.6 12.2 1.6 11.6Z" fill="#fff"/></svg>
<div class="cv" style="left:700px;top:501px;width:113.5px;text-align:right;font-weight:700;font-size:13.5px">Total:</div>
<div class="cv" style="left:819px;top:501px;width:318px;font-weight:700;font-size:14.5px">0</div>
<div class="cv" style="left:1374px;top:501px;width:102px;font-weight:700;font-size:14.5px">0.00</div>
<div class="abs" style="left:1760px;top:547px;width:109px;height:35px;border-radius:3px;background:#0f56a0;color:#fff;font-size:14px;line-height:35px;text-align:center;white-space:nowrap">Save Challan</div>
<div class="abs" style="left:1331px;top:94px;width:200px;height:89px;background:#fff;border-radius:4px;box-shadow:0 5px 16px rgba(20,25,40,.17)"></div>
<div class="abs" style="left:1336px;top:139px;width:200px;height:39px;background:rgba(31,181,115,.065)"></div>
<div class="abs" style="left:1356px;top:151px;width:61px;height:14.5px;background:rgba(31,181,115,.05)"></div>
<svg style="left:1351.5px;top:115px" width="5" height="8" viewBox="0 0 5 8" ><path d="M0.8 0.8 L4.2 4 L0.8 7.2" stroke="#5a6270" stroke-width="1.6" fill="none" stroke-linecap="round" stroke-linejoin="round"/></svg>
<div class="abs" style="left:1368px;top:110px;white-space:nowrap;font-size:13px;line-height:18px;color:#3b4052;letter-spacing:-0.1px">Invoice</div>
<svg style="left:1356.5px;top:155px" width="5" height="8" viewBox="0 0 5 8" ><path d="M0.8 0.8 L4.2 4 L0.8 7.2" stroke="#1fb573" stroke-width="1.8" fill="none" stroke-linecap="round" stroke-linejoin="round"/></svg>
<div class="abs" style="left:1373px;top:149.8px;white-space:nowrap;font-size:13px;line-height:18px;color:#1fb573;letter-spacing:-0.1px">Challan</div>
<div class="abs" style="left:-1px;top:576px;width:313px;height:23px;background:#2b2b2b;border:1px solid #474747;border-top-right-radius:4px;color:#e3e3e3;font-size:12px;line-height:20px;padding-left:6.5px;white-space:nowrap;letter-spacing:-0.09px">127.0.0.1:8000/secure-dashboard/dewaxing-shell-challan</div>
</div>
<div class="abs" style="left:1916px;top:87px;width:4px;height:598px;background:#f7f8fa"></div>
<div class="abs" style="left:1916px;top:87px;width:4px;height:501.6px;background:#a3acb9"></div>
<!-- p30_devtools -->
<div id="dt">
<div class="abs" style="left:0px;top:0px;width:1920px;height:28px;background:#3c3c3c"></div>
<div class="abs" style="left:0px;top:0px;width:1920px;height:1px;background:#5c5c5c"></div>
<div class="abs" style="left:0px;top:27px;width:1920px;height:1px;background:#5a5a5a"></div>
<svg style="left:9px;top:8px" width="16" height="16" viewBox="0 0 16 16" ><path d="M1 1 H13 V6.5 M1 1 V13 H6.5" stroke="#c7c7c7" stroke-width="1.3" fill="none" stroke-dasharray="2 1.6"/><path d="M7 7 L14.5 9.5 L11.4 11.2 L14.6 14.4 L13.8 15.2 L10.6 12 L9.2 14.8Z" fill="#c7c7c7"/></svg>
<svg style="left:36px;top:8px" width="18" height="16" viewBox="0 0 18 16" ><path d="M3 12 V2 H15" stroke="#c7c7c7" stroke-width="1.5" fill="none"/><path d="M0.5 13 H9" stroke="#c7c7c7" stroke-width="1.8"/><rect x="11" y="5" width="5.5" height="8.6" rx="0.8" stroke="#c7c7c7" stroke-width="1.4" fill="none"/></svg>
<div class="abs" style="left:62px;top:8px;width:1px;height:16px;background:#5a5a5a"></div>
<div class="dtt" style="left:75px;letter-spacing:-0.182px;">Elements</div>
<div class="dtt" style="left:145px;letter-spacing:-0.13px;">Console</div>
<div class="dtt" style="left:209px;letter-spacing:-0.379px;">Sources</div>
<div class="dtt" style="left:272.3px;letter-spacing:0.373px;color:#a8c7fa;">Network</div>
<div class="dtt" style="left:339px;letter-spacing:0.03px;">Performance</div>
<div class="dtt" style="left:429px;letter-spacing:0.483px;">Memory</div>
<div class="dtt" style="left:496px;letter-spacing:0.329px;">Application</div>
<div class="dtt" style="left:579px;letter-spacing:0.007px;">Privacy and security</div>
<div class="dtt" style="left:717px;letter-spacing:0.115px;">Lighthouse</div>
<div class="dtt" style="left:798px;letter-spacing:-0.122px;">Recorder</div>
<div class="abs" style="left:262px;top:25px;width:67px;height:3px;background:#a8c7fa;border-radius:2px 2px 0 0"></div>
<svg style="left:1717.5px;top:9px" width="12" height="12" viewBox="0 0 12 12" ><circle cx="6" cy="6" r="5.6" fill="#e46962"/><path d="M3.6 3.6 L8.4 8.4 M8.4 3.6 L3.6 8.4" stroke="#3c3c3c" stroke-width="1.4"/></svg>
<div class="abs" style="left:1731px;top:6px;white-space:nowrap;font-size:12.5px;line-height:20px;color:#e3e3e3">4</div>
<svg style="left:1744px;top:9px" width="13" height="12" viewBox="0 0 13 12" ><path d="M6.5 0.4 L12.8 11.6 H0.2Z" fill="#ee9836"/><rect x="5.8" y="4" width="1.4" height="4" fill="#3c3c3c"/><rect x="5.8" y="9" width="1.4" height="1.4" fill="#3c3c3c"/></svg>
<div class="abs" style="left:1758px;top:6px;white-space:nowrap;font-size:12.5px;line-height:20px;color:#e3e3e3">3</div>
<svg style="left:1772px;top:10px" width="12" height="11" viewBox="0 0 12 11" ><path d="M0.6 0.6 H11.4 V7.8 H3.4 L0.6 10.4Z" fill="#7cacf8"/><path d="M2.6 3 H9.4 M2.6 5.4 H9.4" stroke="#3c3c3c" stroke-width="1"/></svg>
<div class="abs" style="left:1785px;top:6px;white-space:nowrap;font-size:12.5px;line-height:20px;color:#7cacf8">8</div>
<div class="abs" style="left:1802px;top:8px;width:1px;height:16px;background:#5a5a5a"></div>
<svg style="left:1810px;top:4.5px" width="20" height="20" viewBox="0 0 20 20" ><circle cx="10" cy="10" r="10" fill="#3b8aef"/><path d="M5.4 5.4 H11.6 V7 H7 V12.6 H12.6 V9.6 H14.2 V14.2 H9.6 L7.4 16 V14.2 H5.4Z" fill="#fff"/><path d="M13.6 3.6 L14.3 5.5 L16.2 6.2 L14.3 6.9 L13.6 8.8 L12.9 6.9 L11 6.2 L12.9 5.5Z" fill="#fff"/></svg>
<svg style="left:1838px;top:6.5px" width="16" height="16" viewBox="0 0 16 16" ><path d="M8 0.8 L9.3 1 L9.7 2.9 L11 3.5 L12.6 2.4 L13.7 3.5 L12.6 5.1 L13.1 6.4 L15 6.8 V8.4 L15 9.2 L13.1 9.7 L12.6 11 L13.7 12.6 L12.6 13.7 L11 12.6 L9.7 13.1 L9.3 15 H6.7 L6.3 13.1 L5 12.6 L3.4 13.7 L2.3 12.6 L3.4 11 L2.9 9.7 L1 9.2 V6.8 L2.9 6.4 L3.4 5.1 L2.3 3.5 L3.4 2.4 L5 3.5 L6.3 2.9 L6.7 1Z" stroke="#e3e3e3" stroke-width="1.4" fill="none" stroke-linejoin="round"/><circle cx="8" cy="8" r="2.4" stroke="#e3e3e3" stroke-width="1.4" fill="none"/></svg>
<svg style="left:1872px;top:7.5px" width="4" height="14" viewBox="0 0 4 14" ><circle cx="2" cy="2" r="1.4" fill="#e3e3e3"/><circle cx="2" cy="7" r="1.4" fill="#e3e3e3"/><circle cx="2" cy="12" r="1.4" fill="#e3e3e3"/></svg>
<svg style="left:1896px;top:9.5px" width="10" height="10" viewBox="0 0 10 10" ><path d="M0.5 0.5 L9.5 9.5 M9.5 0.5 L0.5 9.5" stroke="#e3e3e3" stroke-width="1.5"/></svg>
<div class="abs" style="left:0px;top:54px;width:1920px;height:1px;background:#4a4a4a"></div>
<svg style="left:8px;top:33.5px" width="16" height="16" viewBox="0 0 16 16" ><circle cx="8" cy="8" r="6.8" stroke="#e46962" stroke-width="1.6" fill="none"/><rect x="4.9" y="4.9" width="6.2" height="6.2" rx="1" fill="#e46962"/></svg>
<svg style="left:36px;top:33.5px" width="16" height="16" viewBox="0 0 16 16" ><circle cx="8" cy="8" r="6.8" stroke="#c7c7c7" stroke-width="1.5" fill="none"/><path d="M12.6 3.4 L3.4 12.6" stroke="#c7c7c7" stroke-width="1.5"/></svg>
<div class="abs" style="left:62px;top:33px;width:1px;height:17px;background:#5a5a5a"></div>
<svg style="left:75px;top:35px" width="15" height="14" viewBox="0 0 15 14" ><path d="M0.4 0.6 H11.4 L7.2 6.2 V11.4 H4.6 V6.2Z" fill="#7cacf8"/><circle cx="12.2" cy="11.6" r="1.8" fill="#7cacf8"/></svg>
<svg style="left:102px;top:34.5px" width="14" height="14" viewBox="0 0 14 14" ><circle cx="5.4" cy="5.4" r="4.2" stroke="#c7c7c7" stroke-width="1.6" fill="none"/><path d="M8.6 8.6 L13 13" stroke="#c7c7c7" stroke-width="1.8"/></svg>
<div class="abs" style="left:127px;top:33px;width:1px;height:17px;background:#5a5a5a"></div>
<div class="abs" style="left:139px;top:36px;width:11px;height:11px;border:1px solid #8e8e8e;border-radius:2px;background:#282828"></div>
<div class="dt2" style="left:156px;top:32.5px">Preserve log</div>
<div class="abs" style="left:230px;top:33px;width:1px;height:17px;background:#5a5a5a"></div>
<div class="abs" style="left:241.5px;top:36px;width:11px;height:11px;border:1px solid #8e8e8e;border-radius:2px;background:#282828"></div>
<div class="dt2" style="left:259px;top:32.5px">Disable cache</div>
<div class="abs" style="left:337px;top:30px;width:111px;height:22px;border:1px solid #5e5e5e;border-radius:4px"></div>
<div class="dt2" style="left:345.5px;top:32.5px;font-size:13px;letter-spacing:-0.1px">No throttling</div>
<svg style="left:434px;top:38.5px" width="8" height="5" viewBox="0 0 8 5" ><path d="M0.4 0.4 H7.6 L4 4.4Z" fill="#9a9a9a"/></svg>
<svg style="left:455px;top:33px" width="18" height="16" viewBox="0 0 18 16" ><path d="M1 5.4 C5 1.4 11.6 1.4 15.6 5.4" stroke="#c7c7c7" stroke-width="1.5" fill="none"/><path d="M3.6 8.2 C6.2 5.8 9.6 5.8 11.4 7" stroke="#c7c7c7" stroke-width="1.5" fill="none"/><circle cx="8.2" cy="11.6" r="1.3" fill="#c7c7c7"/><circle cx="13.6" cy="11.4" r="2" stroke="#c7c7c7" stroke-width="1.3" fill="none"/><path d="M13.6 8.2 V9 M13.6 13.8 V14.6 M10.4 11.4 H11.2 M16 11.4 H16.8 M11.4 9.2 L12 9.8 M15.2 13 L15.8 13.6 M15.8 9.2 L15.2 9.8 M12 13 L11.4 13.6" stroke="#c7c7c7" stroke-width="1.1"/></svg>
<div class="abs" style="left:481px;top:33px;width:1px;height:17px;background:#5a5a5a"></div>
<svg style="left:492.5px;top:34px" width="14" height="14" viewBox="0 0 14 14" ><path d="M7 10 V1.6 M3.2 5 L7 1.2 L10.8 5" stroke="#c7c7c7" stroke-width="1.6" fill="none"/><path d="M1.4 9.6 V12.6 H12.6 V9.6" stroke="#c7c7c7" stroke-width="1.6" fill="none"/></svg>
<svg style="left:520.5px;top:34px" width="14" height="14" viewBox="0 0 14 14" ><path d="M7 1 V9.4 M3.2 6 L7 9.8 L10.8 6" stroke="#c7c7c7" stroke-width="1.6" fill="none"/><path d="M1.4 9.6 V12.6 H12.6 V9.6" stroke="#c7c7c7" stroke-width="1.6" fill="none"/></svg>
<div class="abs" style="left:1883px;top:33px;width:1px;height:17px;background:#5a5a5a"></div>
<svg style="left:1893px;top:33px" width="16" height="16" viewBox="0 0 16 16" ><path d="M8 0.8 L9.3 1 L9.7 2.9 L11 3.5 L12.6 2.4 L13.7 3.5 L12.6 5.1 L13.1 6.4 L15 6.8 V8.4 L15 9.2 L13.1 9.7 L12.6 11 L13.7 12.6 L12.6 13.7 L11 12.6 L9.7 13.1 L9.3 15 H6.7 L6.3 13.1 L5 12.6 L3.4 13.7 L2.3 12.6 L3.4 11 L2.9 9.7 L1 9.2 V6.8 L2.9 6.4 L3.4 5.1 L2.3 3.5 L3.4 2.4 L5 3.5 L6.3 2.9 L6.7 1Z" stroke="#e3e3e3" stroke-width="1.4" fill="none" stroke-linejoin="round"/><circle cx="8" cy="8" r="2.4" stroke="#e3e3e3" stroke-width="1.4" fill="none"/></svg>
<div class="abs" style="left:5px;top:58.5px;width:662px;height:20px;background:#3c3c3c;border-radius:10px"></div>
<svg style="left:16px;top:63px" width="10" height="11" viewBox="0 0 10 11" ><path d="M0.6 0.7 H9.4 L6 5.2 V10.2 H4 V5.2Z" stroke="#c7c7c7" stroke-width="1.2" fill="none" stroke-linejoin="round"/></svg>
<div class="dt2" style="left:33px;top:59.5px;color:#c7c7c7">Filter</div>
<div class="abs" style="left:679px;top:62.5px;width:12px;height:12px;border:1px solid #8e8e8e;border-radius:2px;background:#282828"></div>
<div class="dt2" style="left:697px;top:59.5px">Invert</div>
<div class="abs" style="left:738px;top:60px;width:1px;height:17px;background:#5a5a5a"></div>
<div class="dt2" style="left:757px;top:59.5px;letter-spacing:0.15px">More filters</div>
<svg style="left:824px;top:66px" width="9" height="6" viewBox="0 0 9 6" ><path d="M0.3 0.3 H8.7 L4.5 5.7Z" fill="#c7c7c7"/></svg>
<div class="chip" style="left:850.3px;width:24.2px;">All</div>
<div class="chip" style="left:884.3px;width:64.7px;background:#004a77;border-color:#004a77;color:#c2e7ff;">Fetch/XHR</div>
<div class="chip" style="left:953.3px;width:30.7px;">Doc</div>
<div class="chip" style="left:988.8px;width:31.2px;">CSS</div>
<div class="chip" style="left:1023.8px;width:22.2px;">JS</div>
<div class="chip" style="left:1049.8px;width:35.2px;">Font</div>
<div class="chip" style="left:1088.8px;width:31.2px;">Img</div>
<div class="chip" style="left:1123.8px;width:43.2px;">Media</div>
<div class="chip" style="left:1170.8px;width:56.2px;">Manifest</div>
<div class="chip" style="left:1230.8px;width:45.2px;">Socket</div>
<div class="chip" style="left:1279.8px;width:43.2px;">Wasm</div>
<div class="chip" style="left:1326.8px;width:40.2px;">Other</div>
<div class="abs" style="left:879px;top:60px;width:1px;height:17px;background:#5a5a5a"></div>
<div class="abs" style="left:0px;top:81px;width:1920px;height:1px;background:#555"></div>
<div class="gl" style="left:65px"></div>
<div class="tl" style="left:3px">500 ms</div>
<div class="gl" style="left:130px"></div>
<div class="tl" style="left:68px">1,000 ms</div>
<div class="gl" style="left:196px"></div>
<div class="tl" style="left:134px">1,500 ms</div>
<div class="gl" style="left:261px"></div>
<div class="tl" style="left:199px">2,000 ms</div>
<div class="gl" style="left:326px"></div>
<div class="tl" style="left:264px">2,500 ms</div>
<div class="gl" style="left:392px"></div>
<div class="tl" style="left:330px">3,000 ms</div>
<div class="gl" style="left:457px"></div>
<div class="tl" style="left:395px">3,500 ms</div>
<div class="gl" style="left:522px"></div>
<div class="tl" style="left:460px">4,000 ms</div>
<div class="gl" style="left:588px"></div>
<div class="tl" style="left:526px">4,500 ms</div>
<div class="gl" style="left:653px"></div>
<div class="tl" style="left:591px">5,000 ms</div>
<div class="gl" style="left:718px"></div>
<div class="tl" style="left:656px">5,500 ms</div>
<div class="gl" style="left:784px"></div>
<div class="tl" style="left:722px">6,000 ms</div>
<div class="gl" style="left:849px"></div>
<div class="tl" style="left:787px">6,500 ms</div>
<div class="gl" style="left:914px"></div>
<div class="tl" style="left:852px">7,000 ms</div>
<div class="gl" style="left:979px"></div>
<div class="tl" style="left:917px">7,500 ms</div>
<div class="gl" style="left:1045px"></div>
<div class="tl" style="left:983px">8,000 ms</div>
<div class="gl" style="left:1110px"></div>
<div class="tl" style="left:1048px">8,500 ms</div>
<div class="gl" style="left:1175px"></div>
<div class="tl" style="left:1113px">9,000 ms</div>
<div class="gl" style="left:1241px"></div>
<div class="tl" style="left:1179px">9,500 ms</div>
<div class="gl" style="left:1306px"></div>
<div class="tl" style="left:1244px">10,000 ms</div>
<div class="gl" style="left:1371px"></div>
<div class="tl" style="left:1309px">10,500 ms</div>
<div class="gl" style="left:1437px"></div>
<div class="tl" style="left:1375px">11,000 ms</div>
<div class="gl" style="left:1502px"></div>
<div class="tl" style="left:1440px">11,500 ms</div>
<div class="gl" style="left:1567px"></div>
<div class="tl" style="left:1505px">12,000 ms</div>
<div class="gl" style="left:1633px"></div>
<div class="tl" style="left:1571px">12,500 ms</div>
<div class="gl" style="left:1698px"></div>
<div class="tl" style="left:1636px">13,000 ms</div>
<div class="gl" style="left:1763px"></div>
<div class="tl" style="left:1701px">13,500 ms</div>
<div class="gl" style="left:1829px"></div>
<div class="tl" style="left:1767px">14,000 ms</div>
<div class="gl" style="left:1894px"></div>
<div class="tl" style="left:1832px">14,500 ms</div>
<div class="abs" style="left:-1px;top:81.5px;width:5.5px;height:19px;background:#004a77;border:1px solid #1a87c9;border-radius:0 3px 3px 0"></div>
<div class="abs" style="left:1.5px;top:86.5px;width:1px;height:8px;background:#cfe6f7"></div>
<div class="abs" style="left:0px;top:100px;width:2px;height:62px;background:#0f81c7"></div>
<div class="abs" style="left:1915px;top:81.5px;width:6px;height:19px;background:#004a77;border:1px solid #1a87c9;border-radius:3px 0 0 3px"></div>
<div class="abs" style="left:1917.7px;top:86.5px;width:1px;height:8px;background:#cfe6f7"></div>
<div class="abs" style="left:1918px;top:100px;width:2px;height:62px;background:#0f81c7"></div>
<div class="abs" style="left:2px;top:111px;width:8px;height:1.5px;background:#4a90e2"></div>
<div class="abs" style="left:315px;top:110px;width:9px;height:6px;background:#fff"></div>
<div class="abs" style="left:314px;top:109px;width:119px;height:8px;background:#12335e"></div>
<div class="abs" style="left:315px;top:110px;width:9px;height:6px;background:#fff"></div>
<div class="abs" style="left:324px;top:110px;width:108px;height:6px;background:#1fa94a"></div>
<div class="abs" style="left:433px;top:113.5px;width:8px;height:1.5px;background:#4a90e2"></div>
<div class="abs" style="left:1666px;top:116.5px;width:34px;height:2px;background:#1fa94a"></div>
<div class="abs" style="left:1700px;top:116.5px;width:10px;height:2px;background:#4a90e2"></div>
<div class="abs" style="left:0px;top:162px;width:1920px;height:27px;background:#3c3c3c"></div>
<div class="abs" style="left:0px;top:162px;width:1920px;height:1px;background:#5a5a5a"></div>
<div class="abs" style="left:0px;top:189px;width:1920px;height:1px;background:#5a5a5a"></div>
<div class="abs" style="left:198.5px;top:162px;width:1.5px;height:194px;background:#4a4a4a"></div>
<div class="abs" style="left:0px;top:163px;width:198.5px;height:26px;background:#303030"></div>
<div class="dt2" style="left:5px;top:167.5px;font-size:12.3px">Name</div>
<div class="abs" style="left:0px;top:190px;width:198.5px;height:22px;background:#464646"></div>
<div class="abs" style="left:0px;top:233px;width:198.5px;height:21px;background:#323232"></div>
<svg style="left:6px;top:195.5px" width="12" height="11" viewBox="0 0 12 11" ><path d="M3.6 1 C2 1 2.4 3 2.2 4.2 C2.1 5 1.4 5.2 0.8 5.5 C1.4 5.8 2.1 6 2.2 6.8 C2.4 8 2 10 3.6 10 M8.4 1 C10 1 9.6 3 9.8 4.2 C9.9 5 10.6 5.2 11.2 5.5 C10.6 5.8 9.9 6 9.8 6.8 C9.6 8 10 10 8.4 10" stroke="#f29b55" stroke-width="1.2" fill="none"/><circle cx="6" cy="3.8" r="0.9" fill="#f29b55"/><circle cx="6" cy="7.2" r="0.9" fill="#f29b55"/></svg>
<svg style="left:6px;top:216.5px" width="12" height="11" viewBox="0 0 12 11" ><path d="M3.6 1 C2 1 2.4 3 2.2 4.2 C2.1 5 1.4 5.2 0.8 5.5 C1.4 5.8 2.1 6 2.2 6.8 C2.4 8 2 10 3.6 10 M8.4 1 C10 1 9.6 3 9.8 4.2 C9.9 5 10.6 5.2 11.2 5.5 C10.6 5.8 9.9 6 9.8 6.8 C9.6 8 10 10 8.4 10" stroke="#f29b55" stroke-width="1.2" fill="none"/><circle cx="6" cy="3.8" r="0.9" fill="#f29b55"/><circle cx="6" cy="7.2" r="0.9" fill="#f29b55"/></svg>
<svg style="left:6px;top:237px" width="12" height="12" viewBox="0 0 12 12" ><path d="M1.2 0.8 H7.4 L10.8 4.2 V11.2 H1.2Z M7.2 0.8 V4.4 H10.8" stroke="#c7c7c7" stroke-width="1.2" fill="none" stroke-linejoin="round"/></svg>
<div class="dt2" style="left:23px;top:193px;font-size:12.5px;letter-spacing:-0.08px">proforma-challan-get-items-b...</div>
<div class="dt2" style="left:23px;top:214.2px;font-size:12.5px;letter-spacing:-0.1px">browser-logs</div>
<div class="dt2" style="left:23px;top:235.2px;font-size:12.5px;letter-spacing:-0.1px">browser-logs</div>
<div class="abs" style="left:257.5px;top:190px;width:1px;height:140px;background:#454545"></div>
<div class="abs" style="left:284.5px;top:190px;width:1px;height:140px;background:#454545"></div>
<div class="abs" style="left:310.5px;top:196.5px;width:1px;height:134px;background:#454545"></div>
<div class="code" style="left:314px;top:178.6px">{</div>
<div class="dash" style="top:195.5px">-</div>
<div class="code" style="top:195.5px"><i>"id"</i>: <u>4</u>,</div>
<div class="dash" style="top:212.36px">-</div>
<div class="code" style="top:212.36px"><i>"text"</i>: <i>"M0388C | 2\"600X3\"150 Body(825-0233103)"</i>,</div>
<div class="dash" style="top:229.22px">-</div>
<div class="code" style="top:229.22px"><i>"die_id"</i>: <u>4</u>,</div>
<div class="dash" style="top:246.08px">-</div>
<div class="code" style="top:246.08px"><i>"die_name"</i>: <i>"2\"600X3\"150 Body(825-0233103)"</i>,</div>
<div class="dash" style="top:262.94px">-</div>
<div class="code" style="top:262.94px"><i>"die_no"</i>: <i>"M0388C"</i>,</div>
<div class="dash" style="top:279.8px">-</div>
<div class="code" style="top:279.8px"><i>"metal_id"</i>: <u>1</u>,</div>
<div class="dash" style="top:296.66px">-</div>
<div class="code" style="top:296.66px"><i>"metal_name"</i>: <i>"WCB"</i>,</div>
<div class="dash" style="top:313.52px">-</div>
<div class="code" style="top:313.52px"><i>"hsn_id"</i>: <u>6</u>,</div>
<div class="abs" style="left:199.5px;top:163px;width:1720px;height:26px;background:#3c3c3c"></div>
<svg style="left:214px;top:170.5px" width="10" height="10" viewBox="0 0 10 10" ><path d="M0.5 0.5 L9.5 9.5 M9.5 0.5 L0.5 9.5" stroke="#e3e3e3" stroke-width="1.4"/></svg>
<div class="dt2" style="left:246px;top:168.5px;letter-spacing:-0.143px;">Headers</div>
<div class="dt2" style="left:311px;top:168.5px;letter-spacing:-0.144px;">Payload</div>
<div class="dt2" style="left:374px;top:168.5px;letter-spacing:-0.113px;">Preview</div>
<div class="dt2" style="left:437px;top:168.5px;letter-spacing:-0.362px;color:#a8c7fa;">Response</div>
<div class="dt2" style="left:509px;top:168.5px;letter-spacing:0.456px;">Initiator</div>
<div class="dt2" style="left:573px;top:168.5px;letter-spacing:0.388px;">Timing</div>
<div class="dt2" style="left:631px;top:168.5px;letter-spacing:-0.142px;">Cookies</div>
<div class="abs" style="left:428px;top:186.5px;width:70px;height:3px;background:#a8c7fa;border-radius:2px 2px 0 0"></div>
<div class="abs" style="left:199.5px;top:189px;width:1720px;height:1px;background:#5a5a5a"></div>
<div class="abs" style="left:1905px;top:190px;width:15px;height:140px;background:#2b2b2b"></div>
<svg style="left:1908px;top:196.5px" width="9" height="5" viewBox="0 0 9 5" ><path d="M0.3 4.7 L4.5 0.3 L8.7 4.7Z" fill="#c7c7c7"/></svg>
<svg style="left:1908px;top:317px" width="9" height="5" viewBox="0 0 9 5" ><path d="M0.3 0.3 L4.5 4.7 L8.7 0.3Z" fill="#c7c7c7"/></svg>
<div class="abs" style="left:1908.5px;top:220px;width:8px;height:34.5px;background:#a3a3a3;border-radius:4px"></div>
<div class="abs" style="left:0px;top:329.5px;width:1920px;height:26.5px;background:#282828"></div>
<div class="abs" style="left:0px;top:329.5px;width:1920px;height:1px;background:#5a5a5a"></div>
<div class="dt2" style="left:10px;top:335px;color:#c7c7c7;font-size:12.3px">3 / 4 requests</div>
<div class="abs" style="left:91.5px;top:335px;width:1px;height:16px;background:#5a5a5a"></div>
<div class="dt2" style="left:102px;top:335px;color:#c7c7c7;width:96px;overflow:hidden;font-size:12.3px;letter-spacing:-0.3px">1.6 kB / 1.7 kB transferred</div>
<div class="abs" style="left:198.5px;top:330.5px;width:1.5px;height:26px;background:#4a4a4a"></div>
<div class="dt2" style="left:207px;top:333px;color:#7cacf8;font-size:14px;letter-spacing:5px">{}</div>
</div>
<!-- p40_taskbar -->
<div id="tb">
<svg style="left:16px;top:12px" width="16" height="16" viewBox="0 0 16 16" ><path d="M0 2.3 L6.9 1.3 V7.6 H0Z M7.8 1.2 L16 0 V7.6 H7.8Z M0 8.4 H6.9 V14.7 L0 13.7Z M7.8 8.4 H16 V16 L7.8 14.8Z" fill="#fff"/></svg>
<div class="abs" style="left:48px;top:0px;width:288px;height:40px;background:#f2f2f2"></div>
<svg style="left:60px;top:11px" width="17" height="17" viewBox="0 0 17 17" ><circle cx="10.4" cy="6.4" r="5.4" stroke="#1f1f1f" stroke-width="1.3" fill="none"/><path d="M6.6 10.4 L0.6 16.4" stroke="#1f1f1f" stroke-width="1.3"/></svg>
<div class="abs" style="left:88px;top:10px;white-space:nowrap;font-size:15px;line-height:20px;color:#1f1f1f;letter-spacing:-0.25px">Type here to search</div>
<svg style="left:256px;top:0px" width="80" height="40" viewBox="0 0 80 40" ><defs><linearGradient id="cg" x1="0" y1="0.3" x2="1" y2="0.5"><stop offset="0" stop-color="#2e3582"/><stop offset=".5" stop-color="#9566b4"/><stop offset=".8" stop-color="#d58cc8"/><stop offset="1" stop-color="#e8a8c8"/></linearGradient><radialGradient id="mg" cx=".5" cy=".5" r=".5"><stop offset="0" stop-color="#fff3c4"/><stop offset=".8" stop-color="#fde9a6"/><stop offset="1" stop-color="#f8d88a"/></radialGradient><linearGradient id="gg" x1="0" y1="0" x2="1" y2="0"><stop offset="0" stop-color="#2f6a4a"/><stop offset=".55" stop-color="#8fae7c"/><stop offset="1" stop-color="#2f7a3a"/></linearGradient></defs><path d="M11 9 C13 4 34 2.5 48 3.5 C56 4 61 7 62 11 L62 36 H16 C10 35 9 32 9 30 C8 27 11 25 11 23 C11 21 5 21 5.5 19 C6 17 11 16 11 13 C11 11 10 10 11 9Z" fill="url(#cg)"/><circle cx="44" cy="22.5" r="16.2" fill="url(#mg)"/><ellipse cx="42" cy="42" rx="40" ry="7" fill="url(#gg)"/><g transform="translate(-4.5,-0.6)"><path d="M72 12 C72 6 75 3.5 78 4.5 C82 6 82.5 13 81 18 C80 21 79.5 23 80.5 25.5" stroke="#1c262b" stroke-width="2.4" fill="none" stroke-linecap="round"/><path d="M40.5 19 C43 12 49 6.5 56 6.2 C63 6 69 9 71.5 14 C73.5 19 73 27 74.5 33 C75 35.5 76 37 77 38 L72.5 38.5 C70 34 69 29 67.5 25 C67 29 66 34 64 38 L59.5 38.5 C61.5 33 62 28 61 23 C58 19 54 20.5 52 25 C50 30 48 35 45 38.5 L41 38.5 C43 35 44 32 44.5 29 C42.5 32 40.5 36 38 38.5 L34 38.5 C36.5 35 38 31 38.5 28Z" fill="#1c262b"/><path d="M33 17.5 L33.6 13 L36.6 16 C38 15.6 39.4 15.6 40.6 16 L43.4 13 L44 18 C45 20 45 23 43.6 25.5 C42 28 39 29.5 36.6 28.6 C34 27.6 32 25 32 22 C32 20 32.4 18.6 33 17.5Z" fill="#1c262b"/><ellipse cx="35.2" cy="22.6" rx="1.2" ry="0.9" fill="#f2b21a"/><ellipse cx="39.4" cy="22.8" rx="1.4" ry="1" fill="#f2b21a"/></g><path d="M26 7 l0.6 1.3 1.3 0.6 -1.3 0.6 -0.6 1.3 -0.6 -1.3 -1.3 -0.6 1.3 -0.6Z M20 15.6 l0.6 1.3 1.3 0.6 -1.3 0.6 -0.6 1.3 -0.6 -1.3 -1.3 -0.6 1.3 -0.6Z M25.4 21.6 l0.6 1.3 1.3 0.6 -1.3 0.6 -0.6 1.3 -0.6 -1.3 -1.3 -0.6 1.3 -0.6Z M15 28 l0.6 1.3 1.3 0.6 -1.3 0.6 -0.6 1.3 -0.6 -1.3 -1.3 -0.6 1.3 -0.6Z" fill="#fff" opacity=".92"/></svg>
<svg style="left:351.5px;top:12px" width="17" height="16" viewBox="0 0 17 16" ><path d="M0.5 0.6 H12.5 M0.5 15.4 H12.5" stroke="#fff" stroke-width="1.2"/><rect x="1.6" y="4" width="9.8" height="8" stroke="#fff" stroke-width="1.2" fill="none"/><path d="M15.6 0.6 V2.6 M15.6 4.4 V11.6 M15.6 13.4 V15.4" stroke="#fff" stroke-width="1.4"/></svg>
<svg style="left:400px;top:11px" width="22" height="18" viewBox="0 0 22 18" ><path d="M0 2 C0 1 0.6 0.4 1.6 0.4 H8 L10 2.6 H20.4 C21.4 2.6 22 3.2 22 4.2 V16 C22 17 21.4 17.6 20.4 17.6 H1.6 C0.6 17.6 0 17 0 16Z" fill="#f5b821"/><path d="M0 5.4 H22 V16 C22 17 21.4 17.6 20.4 17.6 H1.6 C0.6 17.6 0 17 0 16Z" fill="#fcd661"/><path d="M5 12 H17 V17.6 H14.4 V14.4 H7.6 V17.6 H5Z" fill="#3a96dd"/></svg>
<svg style="left:447.5px;top:7.5px" width="23" height="23" viewBox="0 0 23 23" ><circle cx="9.6" cy="4.4" r="3.9" fill="#7b83eb"/><circle cx="18.2" cy="6.4" r="2.9" fill="#5059c9"/><path d="M14.6 10 H22 C22.6 10 23 10.4 23 11 V16.4 C23 19 21 20.6 18.8 20.6 C16.4 20.6 14.6 19 14.6 16.4Z" fill="#5059c9"/><path d="M5 10 H15.6 C16.2 10 16.6 10.4 16.6 11 V17.4 C16.6 20.6 14 22.8 10.8 22.8 C7.6 22.8 5 20.6 5 17.4Z" fill="#7b83eb"/><rect x="0" y="10.4" width="10.6" height="10.6" rx="1.4" fill="#4b53bc"/><path d="M2.8 13.2 H7.8 V14.5 H6 V18.6 H4.6 V14.5 H2.8Z" fill="#fff"/></svg>
<svg style="left:500px;top:12px" width="17" height="16" viewBox="0 0 17 16" ><defs><linearGradient id="aa" x1="0" y1="0" x2="0" y2="1"><stop offset="0" stop-color="#f0503c"/><stop offset=".22" stop-color="#e8a03c"/><stop offset=".4" stop-color="#3ec46d"/><stop offset=".6" stop-color="#2f8fe8"/><stop offset="1" stop-color="#2a6fd8"/></linearGradient></defs><path d="M8.5 0.2 C10.4 3.6 14.2 10.4 16.9 15.8 C15.4 15 14.2 14.2 13 13.2 C11.6 10.8 10 8.4 8.5 6.4 C7 8.4 5.4 10.8 4 13.2 C2.8 14.2 1.6 15 0.1 15.8 C2.8 10.4 6.6 3.6 8.5 0.2Z" fill="url(#aa)"/></svg>
<svg style="left:545px;top:7px" width="26" height="26" viewBox="0 0 26 26" ><circle cx="12.7" cy="12.6" r="11.7" fill="#fff"/><path d="M12.7 12.6 L2.57 6.75 A11.7 11.7 0 0 1 22.83 6.75Z" fill="#ea4335"/><path d="M12.7 12.6 L22.83 6.75 A11.7 11.7 0 0 1 12.70 24.30Z" fill="#fbbc04"/><path d="M12.7 12.6 L12.70 24.30 A11.7 11.7 0 0 1 2.57 6.75Z" fill="#34a853"/><circle cx="12.7" cy="12.6" r="5.38" fill="#fff"/><circle cx="12.7" cy="12.6" r="4.21" fill="#4285f4"/><circle cx="19" cy="19.5" r="7.3" fill="#0a4b3c"/><text x="19" y="22.6" font-family="Liberation Sans, sans-serif" font-size="8.5" font-weight="700" fill="#fff" text-anchor="middle">R</text></svg>
<svg style="left:594px;top:7px" width="26" height="26" viewBox="0 0 26 26" ><circle cx="13" cy="12.6" r="11.7" fill="#fff"/><path d="M13 12.6 L2.87 6.75 A11.7 11.7 0 0 1 23.13 6.75Z" fill="#ea4335"/><path d="M13 12.6 L23.13 6.75 A11.7 11.7 0 0 1 13.00 24.30Z" fill="#fbbc04"/><path d="M13 12.6 L13.00 24.30 A11.7 11.7 0 0 1 2.87 6.75Z" fill="#34a853"/><circle cx="13" cy="12.6" r="5.38" fill="#fff"/><circle cx="13" cy="12.6" r="4.21" fill="#4285f4"/></svg>
<div class="abs" style="left:391px;top:38px;width:40px;height:2px;background:#76b9ed"></div>
<div class="abs" style="left:440px;top:38px;width:40px;height:2px;background:#76b9ed"></div>
<div class="abs" style="left:489px;top:38px;width:40px;height:2px;background:#76b9ed"></div>
<div class="abs" style="left:538px;top:38px;width:40px;height:2px;background:#76b9ed"></div>
<div class="abs" style="left:587px;top:38px;width:40px;height:2px;background:#76b9ed"></div>
<div class="abs" style="left:570px;top:38px;width:8px;height:2px;background:#4f86b8"></div>
<svg style="left:1504px;top:8px" width="24" height="24" viewBox="0 0 24 24" ><defs><linearGradient id="ts" x1="0" y1="0" x2="1" y2="1"><stop offset="0" stop-color="#6a5cf5"/><stop offset="1" stop-color="#c04fe0"/></linearGradient></defs><rect x="3" y="6" width="17" height="16" rx="3" fill="#6a3fc8" transform="rotate(8 12 14)"/><rect x="8" y="1" width="15" height="12" rx="2.4" fill="#37b6e6" transform="rotate(-12 16 7)"/><rect x="1" y="5.5" width="20" height="14.5" rx="3" fill="url(#ts)"/><path d="M7 9 C8.6 10.4 9.6 12 9.2 13.8 C8.8 15.6 7.4 16.2 6.4 16.2 C4.8 16.2 3.8 15 4 13.6 C4.2 12.4 5 12.4 5.2 11.2 C6 11.8 6.2 12.4 6.2 13 C7 12 7.2 10.4 7 9Z" fill="#fff"/><path d="M11.6 10.4 H17.6 M11.6 13 H17.6 M11.6 15.6 H15.6" stroke="#fff" stroke-width="1.4"/></svg>
<div class="abs" style="left:1536px;top:10px;white-space:nowrap;font-size:14px;line-height:20px;color:#fff;letter-spacing:-0.2px">Top Stories</div>
<svg style="left:1629px;top:16px" width="12" height="8" viewBox="0 0 12 8" ><path d="M0.6 7.2 L6 1.2 L11.4 7.2" stroke="#fff" stroke-width="1.3" fill="none"/></svg>
<div class="abs" style="left:1650.5px;top:12px;width:16.5px;height:16px;background:#fff;border-radius:2px"></div>
<svg style="left:1652px;top:15px" width="14" height="10" viewBox="0 0 14 10" ><path d="M3.4 9.2 C1.6 9.2 0.6 8 0.6 6.6 C0.6 5.2 1.6 4.2 3 4.2 C3.4 2.2 5 0.8 7 0.8 C9 0.8 10.6 2.2 10.8 4 C12.4 4 13.4 5.2 13.4 6.6 C13.4 8 12.4 9.2 10.8 9.2Z" stroke="#3b7fe0" stroke-width="1.4" fill="none"/><path d="M7 8 V4.6 M5.4 6.2 L7 4.6 L8.6 6.2" stroke="#3b7fe0" stroke-width="1.2" fill="none"/></svg>
<svg style="left:1677px;top:11.5px" width="13" height="17" viewBox="0 0 13 17" ><path d="M2.4 2.6 C3.4 0.6 7.6 0.6 8.6 2.6 M2.4 14.4 C3.4 16.4 7.6 16.4 8.6 14.4" stroke="#fff" stroke-width="1.1" fill="none"/><rect x="0.8" y="5" width="8" height="7" rx="1.6" stroke="#fff" stroke-width="1.2" fill="none"/><path d="M8.8 7.6 L12 5.6 V11.4 L8.8 9.4Z" stroke="#fff" stroke-width="1" fill="none"/></svg>
<svg style="left:1698.5px;top:14px" width="18" height="15" viewBox="0 0 18 15" ><path d="M4 10.6 C1.8 10.6 0.4 9.4 0.4 7.6 C0.4 6 1.6 4.8 3.2 4.8 C3.8 2.4 5.6 0.8 8 0.8 C10.4 0.8 12.2 2.2 12.8 4.2 C14.6 4.2 15.8 5.6 15.8 7.4 C15.8 9.2 14.6 10.6 12.8 10.6Z" fill="#cfd3da"/><path d="M4 10.6 C1.8 10.6 0.4 9.4 0.4 7.6 C0.4 6.4 1 5.4 2 5 C4 6 8 9 12 10.6Z" fill="#8d939d"/><circle cx="12.2" cy="9.8" r="4.6" fill="#1273e6"/><rect x="11.6" y="8.8" width="1.2" height="3.4" fill="#fff"/><rect x="11.6" y="6.8" width="1.2" height="1.2" fill="#fff"/></svg>
<svg style="left:1723px;top:14px" width="16" height="13" viewBox="0 0 16 13" ><rect x="3.4" y="0.6" width="12" height="8" stroke="#fff" stroke-width="1.1" fill="none"/><path d="M9.4 8.8 V11.6 M5.4 12.2 H13.4" stroke="#fff" stroke-width="1.1"/><rect x="0.6" y="0.6" width="3.4" height="3" stroke="#fff" stroke-width="1" fill="#1e1f25"/><path d="M2.3 3.6 V12.2 H5" stroke="#fff" stroke-width="1" fill="none"/></svg>
<svg style="left:1747px;top:14px" width="15" height="12" viewBox="0 0 15 12" ><path d="M0.6 4 H3 L6.4 0.8 V11.2 L3 8 H0.6Z" stroke="#fff" stroke-width="1.1" fill="none" stroke-linejoin="round"/><path d="M9.2 3.8 L13.8 8.4 M13.8 3.8 L9.2 8.4" stroke="#fff" stroke-width="1.1"/></svg>
<div class="tbt" style="left:1764px;top:5px;width:41px">ENG</div>
<div class="tbt" style="left:1764px;top:22px;width:41px">IN</div>
<div class="tbt" style="left:1800px;top:4px;width:70px">11:45 AM</div>
<div class="tbt" style="left:1800px;top:22px;width:70px">3/13/2026</div>
<svg style="left:1878.5px;top:12px" width="17" height="14" viewBox="0 0 17 14" ><path d="M0.5 0.5 H16.5 V11 H6 L3 13.6 V11 H0.5Z" fill="#fff"/><path d="M3 3.4 H14 M3 5.8 H14 M3 8.2 H14" stroke="#1e1f25" stroke-width="1"/></svg>
<div class="abs" style="left:1884.5px;top:16.5px;width:20.5px;height:20.5px;border-radius:11px;background:#1e1f25;border:1px solid #6a6c74"></div>
<div class="tbt" style="left:1884.5px;top:20px;width:20.5px;font-size:11.5px">23</div>
<div class="abs" style="left:1914.5px;top:0px;width:1px;height:40px;background:#5a5c64"></div>
</div>
</div>
</body>
</html>
